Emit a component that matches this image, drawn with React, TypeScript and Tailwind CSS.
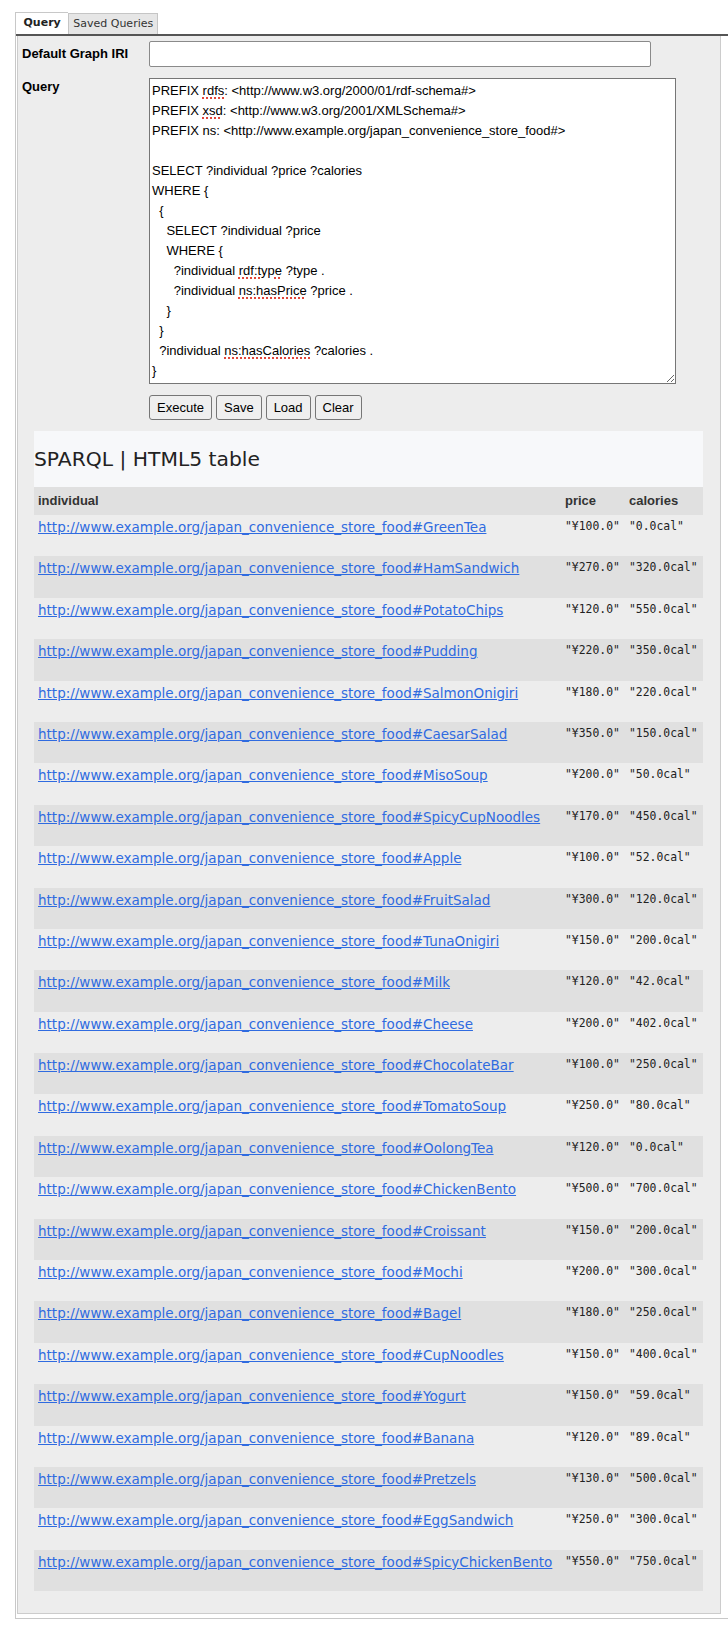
import React from "react";

const rows: [string, string, string][] = [
  ["GreenTea", "¥100.0", "0.0cal"],
  ["HamSandwich", "¥270.0", "320.0cal"],
  ["PotatoChips", "¥120.0", "550.0cal"],
  ["Pudding", "¥220.0", "350.0cal"],
  ["SalmonOnigiri", "¥180.0", "220.0cal"],
  ["CaesarSalad", "¥350.0", "150.0cal"],
  ["MisoSoup", "¥200.0", "50.0cal"],
  ["SpicyCupNoodles", "¥170.0", "450.0cal"],
  ["Apple", "¥100.0", "52.0cal"],
  ["FruitSalad", "¥300.0", "120.0cal"],
  ["TunaOnigiri", "¥150.0", "200.0cal"],
  ["Milk", "¥120.0", "42.0cal"],
  ["Cheese", "¥200.0", "402.0cal"],
  ["ChocolateBar", "¥100.0", "250.0cal"],
  ["TomatoSoup", "¥250.0", "80.0cal"],
  ["OolongTea", "¥120.0", "0.0cal"],
  ["ChickenBento", "¥500.0", "700.0cal"],
  ["Croissant", "¥150.0", "200.0cal"],
  ["Mochi", "¥200.0", "300.0cal"],
  ["Bagel", "¥180.0", "250.0cal"],
  ["CupNoodles", "¥150.0", "400.0cal"],
  ["Yogurt", "¥150.0", "59.0cal"],
  ["Banana", "¥120.0", "89.0cal"],
  ["Pretzels", "¥130.0", "500.0cal"],
  ["EggSandwich", "¥250.0", "300.0cal"],
  ["SpicyChickenBento", "¥550.0", "750.0cal"],
];

const BASE = "http://www.example.org/japan_convenience_store_food#";

// red dotted spell-check underline
const Sp = ({ children }: { children: React.ReactNode }) => (
  <span className="underline decoration-dotted decoration-[#e0463a] decoration-[2px] underline-offset-[3px]">
    {children}
  </span>
);

const QueryText = () => (
  <div className="whitespace-pre">
    {"PREFIX "}<Sp>rdfs</Sp>{": <http://www.w3.org/2000/01/rdf-schema#>\n"}
    {"PREFIX "}<Sp>xsd</Sp>{": <http://www.w3.org/2001/XMLSchema#>\n"}
    {"PREFIX ns: <http://www.example.org/japan_convenience_store_food#>\n"}
    {"\n"}
    {"SELECT ?individual ?price ?calories\n"}
    {"WHERE {\n"}
    {"  {\n"}
    {"    SELECT ?individual ?price\n"}
    {"    WHERE {\n"}
    {"      ?individual "}<Sp>rdf:type</Sp>{" ?type .\n"}
    {"      ?individual "}<Sp>ns:hasPrice</Sp>{" ?price .\n"}
    {"    }\n"}
    {"  }\n"}
    {"  ?individual "}<Sp>ns:hasCalories</Sp>{" ?calories .\n"}
    {"}\n"}
    {"GROUP BY ?individual ?price ?calories\n"}
    {"ORDER BY ?individual"}
  </div>
);

export default function App() {
  return (
    <div className="w-[728px] h-[1632px] bg-white overflow-hidden pt-[12px] pl-[15px]">
      <div className="border-l border-b border-[#c8c8c8] h-[1607px] flex flex-col">
        {/* tabs */}
        <div className="flex items-end h-[22px] font-['DejaVu_Sans',sans-serif] text-[11px]">
          <div className="h-[22px] px-[7.5px] flex items-center bg-white font-bold text-[#222] border-t border-[#c8c8c8]">
            Query
          </div>
          <div className="h-[21px] px-[4px] flex items-center bg-[#e6e6e6] border border-b-0 border-[#c5c5c5] text-[#333]">
            Saved Queries
          </div>
        </div>
        <div className="h-[2px] bg-[#555]" />

        {/* panel */}
        <div className="flex-1 ml-[1px] mr-[7px] mb-[4px] bg-[#ededed] border-l border-r border-b border-[#cccccc] pl-[4px] pt-[5px] font-['Liberation_Sans',Arial,sans-serif] text-[13px] text-black">
          <div className="grid grid-cols-[127px_1fr] gap-y-[11px]">
            <div className="font-bold h-[26px] flex items-center">Default Graph IRI</div>
            <div className="h-[26px] w-[502px] bg-white border border-[#8a8a8a] rounded-[2px]" />

            <div className="font-bold leading-[18px]">Query</div>
            <div className="w-[527px] h-[306px] bg-white border border-[#767676] resize overflow-hidden pl-[2px] pt-[1.5px] leading-[20px]">
              <QueryText />
            </div>

            <div />
            <div className="flex gap-[4px]">
              {["Execute", "Save", "Load", "Clear"].map((b) => (
                <button
                  key={b}
                  className="h-[25px] px-[7px] bg-[#efefef] border border-[#767676] rounded-[3px] text-[13px] leading-[16px] text-black"
                >
                  {b}
                </button>
              ))}
            </div>
          </div>

          {/* results */}
          <div className="mt-[11px] ml-[12px] w-[669px]">
            <div className="h-[56px] bg-[#f7f8fa] flex items-center font-['DejaVu_Sans',sans-serif] text-[20.3px] text-[#222]">
              SPARQL | HTML5 table
            </div>
            <div className="grid grid-cols-[527px_64px_78px] h-[28px] bg-[#e0e0e0] items-center font-bold text-[#333] text-[13px]">
              <div className="pl-[4px]">individual</div>
              <div className="pl-[4px]">price</div>
              <div className="pl-[4px]">calories</div>
            </div>
            {rows.map(([name, price, cal], i) => (
              <div
                key={name}
                className={`grid grid-cols-[527px_64px_78px] h-[41.4px] ${i % 2 === 1 ? "bg-[#e0e0e0]" : ""}`}
              >
                <div className="pl-[4px] pt-[3px]">
                  <a
                    href="#"
                    className="font-['DejaVu_Sans',sans-serif] text-[13.5px] leading-[17px] text-[#2f6be0] underline"
                  >
                    {BASE + name}
                  </a>
                </div>
                <div className="pl-[4px] pt-[3px] font-['DejaVu_Sans_Mono',monospace] text-[11.4px] leading-[16px] text-[#222] whitespace-pre">
                  {`"${price}"`}
                </div>
                <div className="pl-[4px] pt-[3px] font-['DejaVu_Sans_Mono',monospace] text-[11.4px] leading-[16px] text-[#222] whitespace-pre">
                  {`"${cal}"`}
                </div>
              </div>
            ))}
          </div>
        </div>
      </div>
    </div>
  );
}
